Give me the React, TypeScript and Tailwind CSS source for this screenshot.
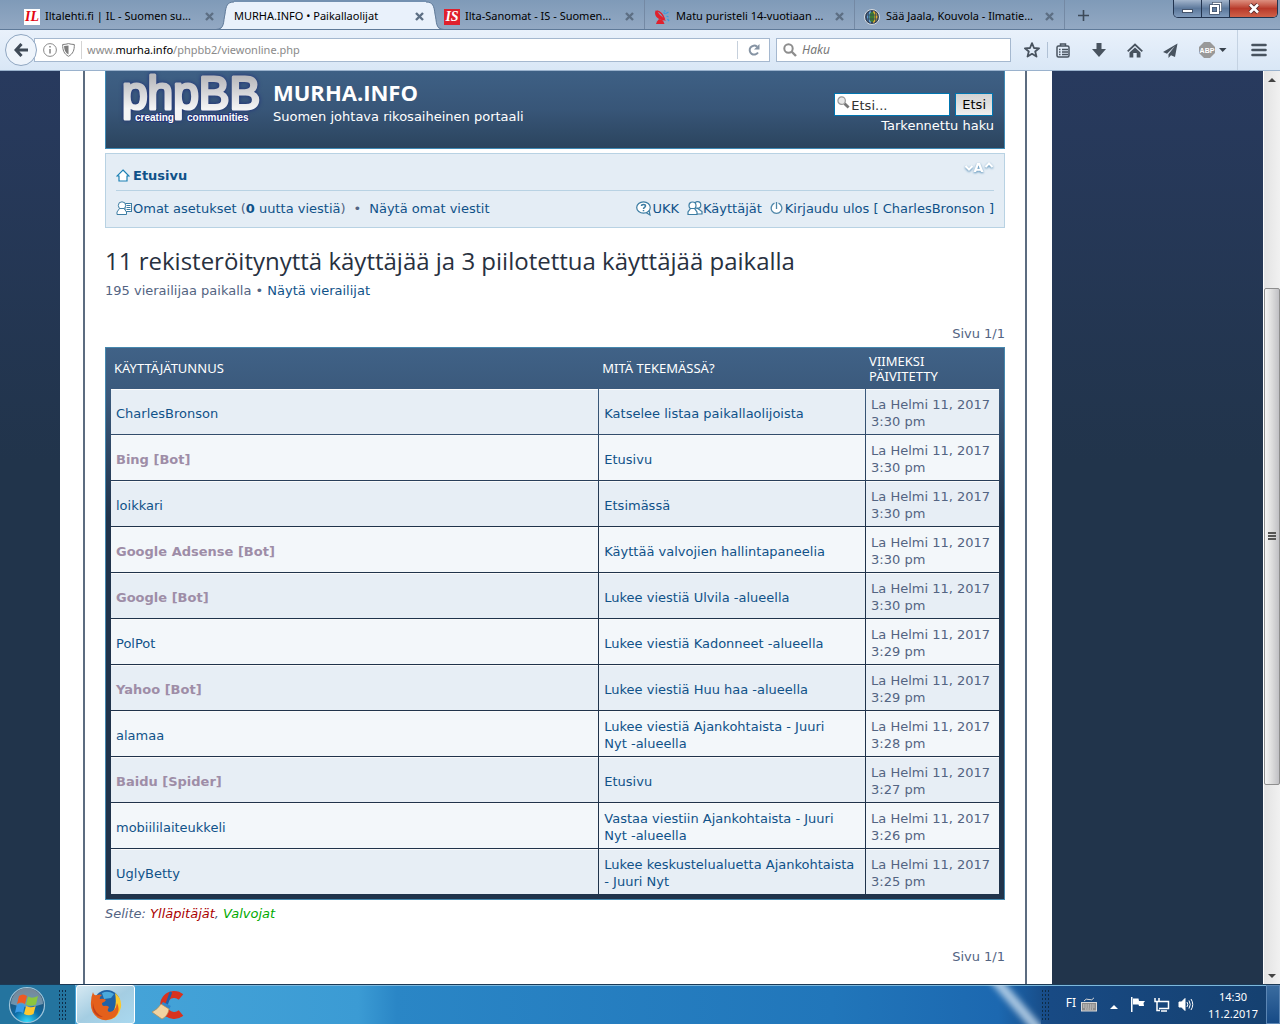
import type { ReactNode } from 'react';

interface OnlineUser {
  name: string;
  bot?: boolean;
  activity: string;
  tail?: string;
  time: string;
}

const users: OnlineUser[] = [
  { name: 'CharlesBronson', activity: 'Katselee listaa paikallaolijoista', time: '3:30 pm' },
  { name: 'Bing [Bot]', bot: true, activity: 'Etusivu', time: '3:30 pm' },
  { name: 'loikkari', activity: 'Etsimässä', time: '3:30 pm' },
  { name: 'Google Adsense [Bot]', bot: true, activity: 'Käyttää valvojien hallintapaneelia', time: '3:30 pm' },
  { name: 'Google [Bot]', bot: true, activity: 'Lukee viestiä Ulvila -alueella', time: '3:30 pm' },
  { name: 'PolPot', activity: 'Lukee viestiä Kadonneet -alueella', time: '3:29 pm' },
  { name: 'Yahoo [Bot]', bot: true, activity: 'Lukee viestiä Huu haa -alueella', time: '3:29 pm' },
  { name: 'alamaa', activity: 'Lukee viestiä Ajankohtaista - Juuri', tail: 'Nyt -alueella', time: '3:28 pm' },
  { name: 'Baidu [Spider]', bot: true, activity: 'Etusivu', time: '3:27 pm' },
  { name: 'mobiililaiteukkeli', activity: 'Vastaa viestiin Ajankohtaista - Juuri', tail: 'Nyt -alueella', time: '3:26 pm' },
  { name: 'UglyBetty', activity: 'Lukee keskustelualuetta Ajankohtaista - Juuri Nyt', time: '3:25 pm' },
];

function CloseTab({ title }: { title: string }) {
  return (
    <button type="button" aria-label={`Sulje ${title}`} className="ml-auto shrink-0 text-[#5d6f84]">
      <svg width="9" height="9" viewBox="0 0 9 9" stroke="currentColor" strokeWidth="2.4">
        <path d="M1 1l7 7M8 1L1 8" />
      </svg>
    </button>
  );
}

function Tab({ title, icon, className }: { title: string; icon?: ReactNode; className: string }) {
  return (
    <div className={`flex h-full shrink-0 items-center pt-1 ${className}`}>
      {icon}
      <button type="button" className="whitespace-nowrap">
        {title}
      </button>
      <CloseTab title={title} />
    </div>
  );
}

function TabCurve({ flip }: { flip?: boolean }) {
  return (
    <svg width="18" height="30" viewBox="0 0 18 30" className={flip ? 'shrink-0 -scale-x-100' : 'shrink-0'}>
      <path d="M0 30C9 30 7 22 9 14C10 6 11 2 18 2V30Z" fill="#e9f1fb" />
      <path d="M0 29.5C9 29 7 22 9 14C10 6 11 2 18 2" fill="none" stroke="#5f7a99" />
    </svg>
  );
}

function LetterIcon({ text, className }: { text: string; className: string }) {
  return (
    <span
      className={`mr-[5px] flex size-4 shrink-0 items-center justify-center font-['Liberation_Serif',serif] text-[14px] leading-4 font-bold italic ${className}`}
    >
      {text}
    </span>
  );
}

function SatelliteIcon() {
  return (
    <svg width="16" height="16" viewBox="0 0 16 16" className="mr-[6px] shrink-0" fill="none">
      <path d="M2 1C-1 5 3 12 12 11.500L9 8.500L6 6Z" fill="#e0202c" />
      <path d="M3 2Q8 3 10.500 10" stroke="#e0202c" strokeWidth="1.300" />
      <path d="M5 10L3 12.500L2 15H10.500L9 11.500Z" fill="#e0202c" />
      <path d="M9.500 3.500l2 1.500M12.500 7l2 1M12 4.500l2.500-1.500M10 1.500l1.500 1M13.500 10l1.500 2" stroke="#3a9be0" strokeWidth="1.300" />
    </svg>
  );
}

function GlobeIcon() {
  return (
    <svg width="16" height="16" viewBox="0 0 16 16" className="mr-[6px] shrink-0">
      <circle cx="8" cy="8" r="7.5" fill="#34435a" stroke="#d8dde2" />
      <path d="M7 2C2 3 1 12 7 14Z" fill="#5c9bd0" />
      <path d="M9 2C15 3 15 12 9 14Z" fill="#e0ac2f" />
      <ellipse cx="8" cy="8" rx="2.500" ry="5" fill="#3b7a36" />
      <path d="M2 6h12M2 10h12M4.500 3v10M11.500 3v10" stroke="#34435a" strokeWidth=".7" />
    </svg>
  );
}

function TabStrip() {
  return (
    <div className="flex h-[30px] shrink-0 overflow-hidden border-b border-[#5f7a99] bg-linear-to-b from-[#7f9ab8] to-[#93a9c3] font-['Noto_Sans',sans-serif] text-[11px] text-black">
      <Tab
        title="Iltalehti.fi | IL - Suomen su..."
        className="w-[216px] pl-6 pr-[2px]"
        icon={<LetterIcon text="IL" className="bg-white text-[#e30613]" />}
      />
      <TabCurve />
      <Tab title="MURHA.INFO • Paikallaolijat" className="w-[192px] border-t-2 border-[#7390b0] bg-[#e9f1fb] pr-[2px] pt-[2px]" />
      <TabCurve flip />
      <Tab
        title="Ilta-Sanomat - IS - Suomen..."
        className="w-[201px] border-r border-[#7489a4] pr-[10px]"
        icon={<LetterIcon text="IS" className="bg-[#e0202c] text-white" />}
      />
      <Tab
        title="Matu puristeli 14-vuotiaan ..."
        className="w-[210px] border-r border-[#7489a4] pl-[9px] pr-[10px]"
        icon={<SatelliteIcon />}
      />
      <Tab
        title="Sää Jaala, Kouvola - Ilmatie..."
        className="w-[210px] border-r border-[#7489a4] pl-[9px] pr-[10px]"
        icon={<GlobeIcon />}
      />
      <button type="button" aria-label="Uusi välilehti" className="ml-[13px] mt-[2px] text-[#3d4a59]">
        <svg width="11" height="11" viewBox="0 0 11 11" stroke="currentColor" strokeWidth="1.6">
          <path d="M5.5 0v11M0 5.5h11" />
        </svg>
      </button>
      <div className="ml-auto mr-[2px] flex h-[18px] shrink-0 overflow-hidden rounded-b-[5px] border border-t-0 border-[#22344f]">
        <button type="button" aria-label="Pienennä" className="flex w-7 items-end justify-center border-r border-[#22344f] bg-linear-to-b from-[#a3b5cc] via-[#5c789b] to-[#7f9abb] pb-1">
          <span className="h-[4px] w-[11px] border border-[#44546c] bg-white" />
        </button>
        <button type="button" aria-label="Palauta" className="flex w-7 items-center justify-center border-r border-[#22344f] bg-linear-to-b from-[#a3b5cc] via-[#5c789b] to-[#7f9abb]">
          <svg width="13" height="13" viewBox="0 0 13 13" fill="none">
            <path d="M4.500 3V1.500H11.500V8.500H10" stroke="#44546c" strokeWidth="3" />
            <path d="M4.500 3V1.500H11.500V8.500H10" stroke="#fff" strokeWidth="1.500" />
            <rect x="2" y="4" width="7" height="7" stroke="#44546c" strokeWidth="3.500" />
            <rect x="2" y="4" width="7" height="7" stroke="#fff" strokeWidth="2" />
          </svg>
        </button>
        <button type="button" aria-label="Sulje" className="flex w-[47px] items-center justify-center bg-linear-to-b from-[#dd8f80] via-[#b8392a] to-[#d06148]">
          <svg width="12" height="11" viewBox="0 0 12 11">
            <path d="M2 1.500L10 9.500M10 1.500L2 9.500" stroke="#5a2a2a" strokeWidth="4.500" />
            <path d="M2 1.500L10 9.500M10 1.500L2 9.500" stroke="#fff" strokeWidth="2.600" />
          </svg>
        </button>
      </div>
    </div>
  );
}

function ToolButton({ label, className = '', children }: { label: string; className?: string; children: ReactNode }) {
  return (
    <button type="button" aria-label={label} className={`flex h-5 shrink-0 items-center justify-center text-[#48535f] ${className}`}>
      {children}
    </button>
  );
}

function NavBar() {
  return (
    <div className="flex h-[41px] shrink-0 items-center border-b border-[#9ab2cd] bg-linear-to-b from-[#e9f1fb] to-[#d9e7f6] pl-[5px] font-['Noto_Sans',sans-serif] text-[12px]">
      <button
        type="button"
        aria-label="Takaisin"
        className="z-10 flex size-8 shrink-0 items-center justify-center rounded-full border border-[#8fa6c1] bg-[#eef4fb] text-[#3f4a57]"
      >
        <svg width="14" height="14" viewBox="0 0 14 14" fill="none" stroke="currentColor" strokeWidth="3">
          <path d="M7.500 1L2 7L7.500 13M2 7H14" />
        </svg>
      </button>
      <div className="-ml-[3px] flex h-6 flex-1 items-center border border-[#a5b8cf] bg-white pl-2">
        <svg width="14" height="14" viewBox="0 0 14 14" fill="none" stroke="#8a8a8a" className="shrink-0">
          <circle cx="7" cy="7" r="6.400" />
          <path d="M7 6v4.500M7 3v1.600" strokeWidth="1.600" />
        </svg>
        <svg width="13" height="14" viewBox="0 0 13 14" className="ml-[5px] shrink-0">
          <path d="M.7 1.500C3 1.500 5 1 6.500.6C8 1 10 1.500 12.300 1.500C12.500 7 11 11 6.500 13.300C2 11 .5 7 .7 1.500Z" fill="#fff" stroke="#7d7d7d" />
          <path d="M6.500 2.500V11.500C3.200 9.500 2.200 7 2.100 3Z" fill="#7d7d7d" />
        </svg>
        <span className="ml-[6px] h-[18px] border-l border-[#d4d4d4]" />
        <div className="ml-[5px] flex-1 text-[11px] text-[#8a8a8a]">
          www.<span className="text-black">murha.info</span>/phpbb2/viewonline.php
        </div>
        <button type="button" aria-label="Päivitä" className="flex h-[18px] w-8 items-center justify-center border-l border-[#c6d0dc]">
          <svg width="12" height="12" viewBox="0 0 12 12" fill="none" stroke="#8593a3" strokeWidth="2">
            <path d="M10 8.500A4.500 4.500 0 1 1 9 2.600" />
            <path d="M11.500 0V5.500H6Z" fill="#8593a3" stroke="none" />
          </svg>
        </button>
      </div>
      <label className="ml-[6px] flex h-6 w-[235px] shrink items-center border border-[#a5b8cf] bg-white pl-[6px]">
        <svg width="14" height="14" viewBox="0 0 14 14" fill="none" stroke="#8d8d8d" strokeWidth="2" className="shrink-0">
          <circle cx="5.500" cy="5.500" r="4.200" />
          <path d="M8.500 8.500L13 13" strokeWidth="2.400" />
        </svg>
        <input
          type="search"
          aria-label="Haku"
          placeholder="Haku"
          className="ml-[5px] w-full min-w-0 bg-transparent italic outline-none placeholder:text-[#777777]"
        />
      </label>
      <ToolButton label="Lisää kirjanmerkki" className="ml-[13px]">
        <svg width="16" height="16" viewBox="0 0 16 16" fill="none" stroke="currentColor" strokeWidth="1.800" strokeLinejoin="round">
          <path d="M8 1.200L10 6L15.100 6.300L11.200 9.500L12.500 14.600L8 11.800L3.500 14.600L4.800 9.500L.9 6.300L6 6Z" />
        </svg>
      </ToolButton>
      <span className="ml-[7px] h-4 border-l border-[#b0c1d5]" />
      <ToolButton label="Kirjanmerkit" className="ml-2">
        <svg width="14" height="15" viewBox="0 0 14 15" fill="none" stroke="currentColor" strokeWidth="1.500">
          <rect x="1" y="3" width="12" height="11" rx="1.500" />
          <path d="M4.500 3V1H9.500V3M3 6.500h1.500M6 6.500h6M3 9h1.500M6 9h6M3 11.500h1.500M6 11.500h6" />
        </svg>
      </ToolButton>
      <ToolButton label="Lataukset" className="ml-[22px]">
        <svg width="14" height="14" viewBox="0 0 14 14" fill="currentColor">
          <path d="M4.500 0H9.500V6H14L7 14L0 6H4.500Z" />
        </svg>
      </ToolButton>
      <ToolButton label="Koti" className="ml-[21px]">
        <svg width="16" height="15" viewBox="0 0 16 15">
          <path d="M.7 8.300L8 1.500L15.300 8.300" fill="none" stroke="currentColor" strokeWidth="1.800" />
          <path d="M2.500 9.500L8 4.500L13.500 9.500V14.500H9.700V10H6.300V14.500H2.500Z" fill="currentColor" />
        </svg>
      </ToolButton>
      <ToolButton label="Jaa" className="ml-5">
        <svg width="15" height="15" viewBox="0 0 15 15">
          <path d="M14.500.5L0 9L4 10.700L12 3L5.500 11.300V15L8 12.300L12 14Z" fill="currentColor" />
        </svg>
      </ToolButton>
      <ToolButton label="Adblock Plus" className="ml-[21px]">
        <svg width="28" height="16" viewBox="0 0 28 16">
          <path d="M5 0H11L16 5V11L11 16H5L0 11V5Z" fill="#999" />
          <text x="8" y="11" textAnchor="middle" fontFamily="Liberation Sans, sans-serif" fontWeight="bold" fontSize="7" fill="#fff">
            ABP
          </text>
          <path d="M20 6H27.500L23.700 10Z" fill="#39434e" />
        </svg>
      </ToolButton>
      <span className="ml-[10px] h-full border-l border-[#c4d2e2]" />
      <ToolButton label="Valikko" className="ml-[13px] mr-[13px]">
        <svg width="16" height="14" viewBox="0 0 16 14" stroke="currentColor" strokeWidth="2.600" strokeLinecap="round">
          <path d="M1.500 2h13M1.500 7h13M1.500 12h13" />
        </svg>
      </ToolButton>
    </div>
  );
}

function PhpBBLogo() {
  return (
    <svg width="144" height="56" viewBox="0 0 144 56" role="img" aria-label="phpBB" className="shrink-0 overflow-visible">
      <defs>
        <linearGradient id="logo" x1="0" y1="0" x2="0" y2="1">
          <stop offset=".2" stopColor="#b9b9bd" />
          <stop offset=".8" stopColor="#f4f4f5" />
        </linearGradient>
      </defs>
      <g fontFamily="Liberation Sans, sans-serif" strokeLinejoin="round">
        <text
          x="2"
          y="38"
          fontSize="46"
          fill="url(#logo)"
          stroke="url(#logo)"
          strokeWidth="3"
          className="drop-shadow-[0_0_2px_#1d2d78]"
        >
          phpBB
        </text>
        <g fontSize="10" fontWeight="bold" fill="#fff" stroke="#25377a" strokeWidth="2" paintOrder="stroke">
          <text x="15" y="50">creating</text>
          <text x="67" y="50">communities</text>
        </g>
      </g>
    </svg>
  );
}

function SiteHeader() {
  return (
    <header className="flex h-[78px] items-start border border-t-0 border-[#3f8ab5] bg-linear-to-b from-[#3e6085] via-[#385678] to-[#2b445e] pl-[14px] pr-[10px] text-white">
      <PhpBBLogo />
      <div className="ml-[9px] pt-[7px]">
        <h1 className="font-['Open_Sans',sans-serif] text-[22px] leading-7 font-bold">MURHA.INFO</h1>
        <p className="mt-[2px]">Suomen johtava rikosaiheinen portaali</p>
      </div>
      <form className="ml-auto flex w-[164px] flex-wrap justify-end pt-[22px]">
        <label className="flex h-[23px] w-[116px] border border-[#0075b0] bg-white pl-[2px] pt-[2px]">
          <svg width="13" height="13" viewBox="0 0 14 14" className="shrink-0">
            <path d="M8 8L12.500 12.500" stroke="#777" strokeWidth="3" />
            <circle cx="5" cy="5" r="4" fill="#e8e8e8" stroke="#999" strokeWidth="1.300" />
          </svg>
          <input type="text" aria-label="Etsi" defaultValue="Etsi..." className="ml-px h-[18px] w-full min-w-0 text-[#333333] outline-none" />
        </label>
        <button type="submit" className="ml-[5px] mr-px h-[23px] border border-[#0075b0] bg-linear-to-b from-[#d2d2d2] to-[#efefef] px-[6px] text-black">
          Etsi
        </button>
        <a href="#haku" className="mt-px whitespace-nowrap">
          Tarkennettu haku
        </a>
      </form>
    </header>
  );
}

function HomeIcon() {
  return (
    <svg width="14" height="13" viewBox="0 0 14 13" className="mr-[3px]">
      <path d="M7 1L13 7H11V12H3V7H1Z" fill="#fff" stroke="#1b80b4" strokeWidth="1.200" />
    </svg>
  );
}

function ProfileIcon() {
  return (
    <svg width="17" height="15" viewBox="0 0 17 15" fill="#fff" stroke="#3c7da3">
      <rect x="9" y="2.500" width="6.500" height="8" />
      <path d="M10.500 4.500h4M10.500 6.500h4M10.500 8.500h4" />
      <circle cx="6" cy="4.500" r="3.700" />
      <path d="M3.500 7.500L1 11V13.500H10.500V11L8 7.500Z" />
    </svg>
  );
}

function FaqIcon() {
  return (
    <svg width="16" height="15" viewBox="0 0 16 15" fill="#fff" stroke="#3c7da3" strokeWidth="1.200">
      <path d="M10 11.500L14 14L13 9Z" />
      <ellipse cx="7.500" cy="6.500" rx="6.800" ry="5.700" />
      <path d="M5.500 5C5.500 3 9.500 3 9.500 5C9.500 6.500 7.500 6.300 7.500 8M7.500 9v1.300" fill="none" strokeWidth="1.500" />
    </svg>
  );
}

function MembersIcon() {
  return (
    <svg width="16" height="15" viewBox="0 0 16 15" fill="#fff" stroke="#3c7da3" strokeWidth="1.200">
      <circle cx="10.500" cy="4" r="3.300" />
      <path d="M10 7L15 10.500V13H9" />
      <circle cx="5.500" cy="4.500" r="3.500" />
      <path d="M3.500 7.500L1 11V13.500H10V11L7.500 7.500Z" />
    </svg>
  );
}

function LogoutIcon() {
  return (
    <svg width="13" height="13" viewBox="0 0 13 13" fill="#fff" stroke="#4f87a9" strokeWidth="1.300">
      <path d="M4.500 1.200A5.300 5.300 0 1 0 8.500 1.200" />
      <path d="M6.500 0V7" />
    </svg>
  );
}

function ForumNav() {
  return (
    <nav className="mt-1 border border-[#b8d2e3] bg-[#e4edf5] px-[10px] text-[#105289]">
      <div className="flex h-[37px] items-center border-b border-[#b8d2e3] pt-[6px]">
        <a href="#etusivu" className="flex items-center font-bold">
          <HomeIcon />
          Etusivu
        </a>
        <button type="button" aria-label="Muuta fonttikokoa" className="mb-4 ml-auto">
          <svg width="30" height="13" viewBox="0 0 30 13" fill="none" className="drop-shadow-[0_1px_1px_#4f8ab4]">
            <path d="M1.500 5L5 8.500L8.500 5M21.500 6L25 2.500L28.500 6" stroke="#fff" strokeWidth="2" />
            <text x="9.500" y="11" fontFamily="DejaVu Sans, sans-serif" fontWeight="bold" fontSize="13" fill="#fff">
              A
            </text>
          </svg>
        </button>
      </div>
      <div className="flex h-9 items-center justify-between pb-[2px]">
        <div className="flex items-center gap-2">
          <a href="#asetukset" className="flex items-center">
            <ProfileIcon />
            <span>
              Omat asetukset <span className="text-[#536482]">(</span>
              <strong>0</strong> uutta viestiä<span className="text-[#536482]">)</span>
            </span>
          </a>
          <span className="text-[#536482]">•</span>
          <a href="#viestit">Näytä omat viestit</a>
        </div>
        <div className="flex items-center gap-2">
          <a href="#ukk" className="flex items-center">
            <FaqIcon />
            UKK
          </a>
          <a href="#kayttajat" className="flex items-center">
            <MembersIcon />
            Käyttäjät
          </a>
          <a href="#ulos" className="flex items-center gap-[2px]">
            <LogoutIcon />
            Kirjaudu ulos [ CharlesBronson ]
          </a>
        </div>
      </div>
    </nav>
  );
}

function UserTable() {
  return (
    <div className="mt-[5px] border border-[#4688ae] bg-[#20334b] bg-[linear-gradient(#406287,#3a587a_50px,#20334b_170px)] px-1 pb-1">
      <table className="w-full table-fixed border-separate border-spacing-px">
        <colgroup>
          <col className="w-[55%]" />
          <col className="w-[30%]" />
          <col className="w-[15%]" />
        </colgroup>
        <thead>
          <tr className="h-[39px] text-left font-['Noto_Sans',sans-serif] text-[13px] leading-[15px] text-white uppercase">
            <th className="px-[3px] font-normal">Käyttäjätunnus</th>
            <th className="px-[3px] font-normal">Mitä tekemässä?</th>
            <th className="px-[3px] font-normal">
              Viimeksi
              <br />
              päivitetty
            </th>
          </tr>
        </thead>
        <tbody>
          {users.map((user) => (
            <tr key={user.name} className="odd:bg-[#e7eef5] even:bg-[#f3f7fa]">
              <td className="border-t border-[#fafafa] px-[5px] pt-[6px] pb-1">
                <a href="#kayttaja" className={user.bot ? 'font-bold text-[#9e8da7]' : 'text-[#105289]'}>
                  {user.name}
                </a>
              </td>
              <td className="border-t border-[#fafafa] px-[5px] pt-[6px] pb-1">
                <a href="#alue" className="text-[#105289]">
                  {user.activity}
                  {user.tail && (
                    <>
                      {' '}
                      <span className="whitespace-nowrap">{user.tail}</span>
                    </>
                  )}
                </a>
              </td>
              <td className="border-t border-[#fafafa] pt-[6px] pb-1 pl-[5px] whitespace-nowrap">
                La Helmi 11, 2017
                <br />
                {user.time}
              </td>
            </tr>
          ))}
        </tbody>
      </table>
    </div>
  );
}

function ForumPage() {
  return (
    <div className="min-w-0 flex-1 bg-[#21344b] bg-[linear-gradient(#283a5e,#21344b_390px)] pl-[60px] pr-[211px]">
      <div className="min-h-full bg-white pl-[23px] pr-[25px]">
        <main className="min-h-[914px] border-x-2 border-[#5c6c80] px-5 font-['Verdana','DejaVu_Sans',sans-serif] text-[13px] leading-[17px] text-[#536482]">
          <SiteHeader />
          <ForumNav />
          <h2 className="mt-[19px] font-['Open_Sans',sans-serif] text-[24px] leading-7 text-[#28313f]">
            11 rekisteröitynyttä käyttäjää ja 3 piilotettua käyttäjää paikalla
          </h2>
          <p className="mt-[7px]">
            195 vierailijaa paikalla •{' '}
            <a href="#vierailijat" className="text-[#105289]">
              Näytä vierailijat
            </a>
          </p>
          <p className="mt-[26px] text-right">Sivu 1/1</p>
          <UserTable />
          <p className="mt-[5px] italic">
            Selite:{' '}
            <a href="#yllapitajat" className="text-[#aa0000]">
              Ylläpitäjät
            </a>
            ,{' '}
            <a href="#valvojat" className="text-[#00aa00]">
              Valvojat
            </a>
          </p>
          <p className="mt-[26px] text-right">Sivu 1/1</p>
        </main>
      </div>
    </div>
  );
}

function ScrollBar() {
  return (
    <div className="flex w-[17px] shrink-0 flex-col border-l border-white bg-linear-to-r from-[#e3e3e3] to-[#f1f1f1]">
      <div className="flex h-[17px] items-center justify-center">
        <svg width="8" height="4" viewBox="0 0 8 4" fill="#444">
          <path d="M0 4L4 0L8 4Z" />
        </svg>
      </div>
      <div className="flex-[200]" />
      <div className="flex flex-[497] flex-col items-center justify-center gap-px rounded-[2px] border border-[#8e8e8e] bg-linear-to-r from-[#f5f5f5] via-[#dcdcdc] to-[#c0c0c4]">
        <span className="h-[2px] w-2 bg-[#555555]" />
        <span className="h-[2px] w-2 bg-[#555555]" />
        <span className="h-[2px] w-2 bg-[#555555]" />
      </div>
      <div className="flex-[182]" />
      <div className="flex h-[17px] items-center justify-center">
        <svg width="8" height="4" viewBox="0 0 8 4" fill="#444">
          <path d="M0 0H8L4 4Z" />
        </svg>
      </div>
    </div>
  );
}

function Grip() {
  return (
    <span className="h-8 w-[8px] shrink-0 bg-[radial-gradient(circle,#0d2c48_1px,transparent_1px)] bg-[size:3px_4px]" />
  );
}

function StartOrb() {
  return (
    <svg width="38" height="38" viewBox="0 0 38 38">
      <defs>
        <radialGradient id="orb" cx=".5" cy="1" r=".9">
          <stop offset="0" stopColor="#35e0ff" />
          <stop offset=".45" stopColor="#0c6ba5" />
          <stop offset="1" stopColor="#2d4b66" />
        </radialGradient>
      </defs>
      <circle cx="19" cy="19" r="17.500" fill="url(#orb)" stroke="#9ec5da" strokeWidth="1.200" />
      <path d="M3 18A16 16 0 0 1 35 18Q19 24 3 18Z" fill="#fff" opacity=".35" />
      <path d="M11 10Q15 7 19 10L17 18Q13 15 9 18Z" fill="#ee5a24" />
      <path d="M20 10.500Q24 13 30 10L28 18.500Q23 21 18 18.500Z" fill="#8cc63f" />
      <path d="M8.700 19Q13 17 16.700 19.500L15 27Q11 24.500 7 27Z" fill="#3a9be8" />
      <path d="M18 20Q23 22.500 27.700 20L25.500 28Q21 30.500 16 28Z" fill="#fdc82f" />
    </svg>
  );
}

function FirefoxIcon() {
  return (
    <svg width="32" height="32" viewBox="0 0 32 32">
      <circle cx="17" cy="14" r="13" fill="#1f62a5" />
      <path d="M12 4Q18 1 24 5L21 9L14 10Z" fill="#49a9dc" />
      <path d="M25 4Q32 9 31 18Q28 31 16 31L20 26Q28 20 25 4Z" fill="#fbc82d" />
      <path
        d="M3 3Q4 7 7 6Q10 5 12 6Q9 8 10 10Q13 9 16 11Q15 13 12 14Q12 17 14 17Q17 16 19 18Q16 23 20 23Q26 22 27 14Q31 22 25 28Q17 34 8 29Q0 23 1 13Q1 8 3 3Z"
        fill="#e4601b"
      />
      <path d="M3 14Q4 24 13 28Q7 28 4 23Q2 19 3 14Z" fill="#c23f1a" />
    </svg>
  );
}

function CCleanerIcon() {
  return (
    <svg width="34" height="32" viewBox="0 0 34 32">
      <path d="M30 8A10.500 10.500 0 1 0 30 24" fill="none" stroke="#d8321f" strokeWidth="7" />
      <path d="M20 3L15 17" stroke="#1f5fa8" strokeWidth="2.500" />
      <path d="M12 13L20 17L18 20L10 16Z" fill="#2f86cf" />
      <path d="M10 15L18 20Q17 27 11 30Q5 26 1 23Q7 20 10 15Z" fill="#f1d3a2" stroke="#b68c50" strokeWidth=".7" />
    </svg>
  );
}

function TaskBar() {
  return (
    <footer className="flex h-10 shrink-0 items-center border-t border-[#1c3a56] bg-[linear-gradient(90deg,#4aa8da,#3b9bd4_28%,#2a86c6_31%,#2176ba_65%,#1c68b0_78%,#184a84_82%,#15406f)] font-['Noto_Sans',sans-serif] text-[11px] text-white shadow-[inset_0_1px_0_#7db8dc]">
      <div className="flex h-full w-[75px] shrink-0 items-center bg-[#24749f] pl-2">
        <button type="button" aria-label="Käynnistä">
          <StartOrb />
        </button>
        <span className="ml-3 flex">
          <Grip />
        </span>
      </div>
      <button
        type="button"
        aria-label="Firefox"
        className="ml-px flex h-full w-[59px] shrink-0 items-center justify-center rounded-[3px] border border-white bg-linear-to-br from-[#d6e9f2] via-[#a4cde2] to-[#a9d8ef]"
      >
        <FirefoxIcon />
      </button>
      <button type="button" aria-label="CCleaner" className="ml-4">
        <CCleanerIcon />
      </button>
      <div className="relative h-full flex-1 overflow-hidden">
        <svg width="70" height="39" viewBox="0 0 70 39" className="absolute top-0 right-0">
          <path d="M20 -10L72 50" stroke="#cfe2f2" strokeWidth="10" opacity=".8" className="blur-[3px]" />
        </svg>
      </div>
      <Grip />
      <button type="button" className="mb-1 ml-[12px] w-5 text-[12px]">
        FI
      </button>
      <svg width="16" height="15" viewBox="0 0 16 15" className="shrink-0" fill="none" stroke="#d8d8d8">
        <path d="M3 4Q5 1 8 2.500T13 .8" />
        <rect x=".5" y="5.500" width="15" height="8.500" fill="#8c8c8c" />
        <path d="M2 8h12M2 10h12M4 12h8" strokeDasharray="1.500 .8" />
      </svg>
      <svg width="8" height="4" viewBox="0 0 8 4" className="mt-1 ml-[13px] shrink-0" fill="#fff">
        <path d="M0 4L4 0L8 4Z" />
      </svg>
      <svg width="16" height="15" viewBox="0 0 16 15" className="ml-3 shrink-0" fill="#fff">
        <path d="M1 0h1.500v15H1ZM3 1.500H8.500L9 4H15L13.500 6L14 9H9L8.500 7.500H3Z" />
      </svg>
      <svg width="16" height="15" viewBox="0 0 16 15" className="ml-2 shrink-0" fill="none" stroke="#fff" strokeWidth="1.500">
        <path d="M5 4.500H14.500V11.500H5M7 14H13M3 6V13.500H6M1 1V4.500H5V1M3 4V6" />
      </svg>
      <svg width="16" height="15" viewBox="0 0 16 15" className="ml-2 shrink-0" fill="none" stroke="#fff">
        <path d="M1 5H3.500L7 1.500V13.500L3.500 10H1Z" fill="#fff" />
        <path d="M9 5Q10.500 7.500 9 10M11 3.500Q13.500 7.500 11 11.500M13 2Q16.500 7.500 13 13" />
      </svg>
      <div className="mr-[2px] ml-2 w-[62px] shrink-0 text-center leading-[17px]">
        <div>14:30</div>
        <div>11.2.2017</div>
      </div>
      <button
        type="button"
        aria-label="Näytä työpöytä"
        className="h-full w-[14px] shrink-0 border border-[#5c86b4] bg-linear-to-b from-[#3a6c9f] to-[#164a86]"
      />
    </footer>
  );
}

export default function App() {
  return (
    <div className="flex h-screen flex-col overflow-hidden">
      <TabStrip />
      <NavBar />
      <div className="flex min-h-0 flex-1 overflow-hidden">
        <ForumPage />
        <ScrollBar />
      </div>
      <TaskBar />
    </div>
  );
}
